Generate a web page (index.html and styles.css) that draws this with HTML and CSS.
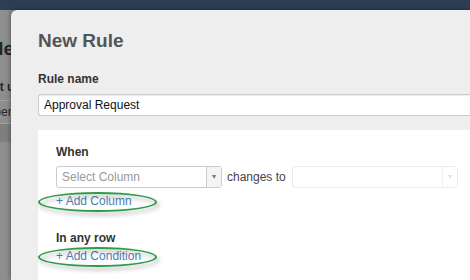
FILE: index.html
```html
<!DOCTYPE html>
<html lang="en">
<head>
  <meta charset="UTF-8">
  <meta name="viewport" content="width=device-width, initial-scale=1.0">
  <title>New Rule</title>
  <link rel="stylesheet" href="styles.css">
</head>
<body>
  <div class="topbar"></div>

  <!-- page behind the dialog (dimmed), only its left edge shows -->
  <div class="page">
    <h2 class="page-title">Rule</h2>
    <p class="page-intro">Set u</p>
    <div class="page-row">Open</div>
    <div class="page-band"></div>
  </div>

  <div class="modal">
    <h1 class="modal-title">New Rule</h1>

    <label class="field-label">Rule name</label>
    <input class="text-input" type="text" value="Approval Request">

    <div class="rule-box">
      <div class="section-label">When</div>
      <div class="when-row">
        <div class="select">
          <span class="select-text">Select Column</span>
          <span class="select-arrow">&#9662;</span>
        </div>
        <span class="when-text">changes to</span>
        <div class="select disabled">
          <span class="select-text"></span>
          <span class="select-arrow">&#9662;</span>
        </div>
      </div>
      <a class="add-link" href="#">+ Add Column<span class="ring"></span></a>

      <div class="section-label any-row">In any row</div>
      <a class="add-link tight" href="#">+ Add Condition<span class="ring"></span></a>
    </div>
  </div>
</body>
</html>
```

FILE: styles.css
```css
body {
  margin: 0;
  height: 280px;
  overflow: hidden;
  background-color: #8e8e8e;
  font-family: "Liberation Sans", Arial, sans-serif;
  position: relative;
}

.topbar {
  height: 10px;
  background-color: #2b3e55;
}

/* dimmed page behind */
.page {
  width: 11px;
  overflow: hidden;
  color: #262626;
  white-space: nowrap;
}

.page-title {
  font-size: 19px;
  font-weight: bold;
  line-height: 22px;
  margin: 28px 0 0 -27px;
}

.page-intro {
  font-size: 12px;
  font-weight: bold;
  margin: 20px 0 0 -15px;
  line-height: 15px;
}

.page-row {
  margin-top: 5px;
  border-top: 1px solid #a4a4a4;
  border-bottom: 1px solid #a4a4a4;
  font-size: 12px;
  line-height: 22px;
  text-indent: -15px;
}

.page-band {
  height: 18px;
  background-color: #7e7e7e;
}

/* dialog */
.modal {
  position: absolute;
  left: 11px;
  top: 10px;
  right: 0;
  bottom: 0;
  background-color: #eeeeee;
  border-radius: 6px 0 0 0;
  box-shadow: -1px 0 4px rgba(0, 0, 0, 0.35);
  padding: 20px 0 0 27px;
}

.modal-title {
  font-size: 19px;
  line-height: 22px;
  font-weight: bold;
  color: #555555;
  margin: 0;
}

.field-label {
  display: block;
  margin-top: 20px;
  font-size: 12px;
  line-height: 15px;
  font-weight: bold;
  color: #333333;
}

.text-input {
  display: block;
  box-sizing: border-box;
  margin-top: 7px;
  width: 100%;
  height: 22px;
  padding: 0 5px;
  border: 1px solid #cccccc;
  border-right: none;
  border-radius: 3px 0 0 3px;
  box-shadow: inset 0 1px 1px rgba(0, 0, 0, 0.08);
  font-family: inherit;
  font-size: 12px;
  color: #111111;
  background-color: #ffffff;
}

.rule-box {
  margin-top: 14px;
  background-color: #ffffff;
  padding: 15px 0 20px 18px;
}

.section-label {
  font-size: 12px;
  line-height: 15px;
  font-weight: bold;
  color: #333333;
}

.when-row {
  display: flex;
  align-items: center;
  margin-top: 6px;
}

.select {
  box-sizing: border-box;
  width: 166px;
  height: 22px;
  display: flex;
  border: 1px solid #cccccc;
  border-radius: 3px;
  background-color: #ffffff;
}

.select-text {
  flex: 1;
  padding-left: 5px;
  font-size: 12px;
  line-height: 20px;
  color: #9a9a9a;
}

.select-arrow {
  width: 14px;
  border-left: 1px solid #cccccc;
  background-color: #f4f4f4;
  color: #777777;
  font-size: 8px;
  line-height: 20px;
  text-align: center;
}

.select.disabled {
  border-color: #ebebeb;
}

.select.disabled .select-arrow {
  border-left-color: #f0f0f0;
  background-color: #ffffff;
  color: #e0e0e0;
}

.when-text {
  font-size: 12px;
  color: #444444;
  margin: 0 6px 0 5px;
}

.add-link {
  position: relative;
  display: inline-block;
  margin-top: 6px;
  font-size: 12px;
  line-height: 15px;
  color: #4d7fb8;
  text-decoration: none;
}

.add-link.tight {
  margin-top: 2px;
}

.any-row {
  margin-top: 22px;
}

/* green annotation rings */
.ring {
  position: absolute;
  left: -18px;
  top: -2px;
  width: 115px;
  height: 16px;
  border: 2px solid #2e9c48;
  border-radius: 50%;
  filter: drop-shadow(2px 3px 2px rgba(0, 0, 0, 0.35));
}
```
